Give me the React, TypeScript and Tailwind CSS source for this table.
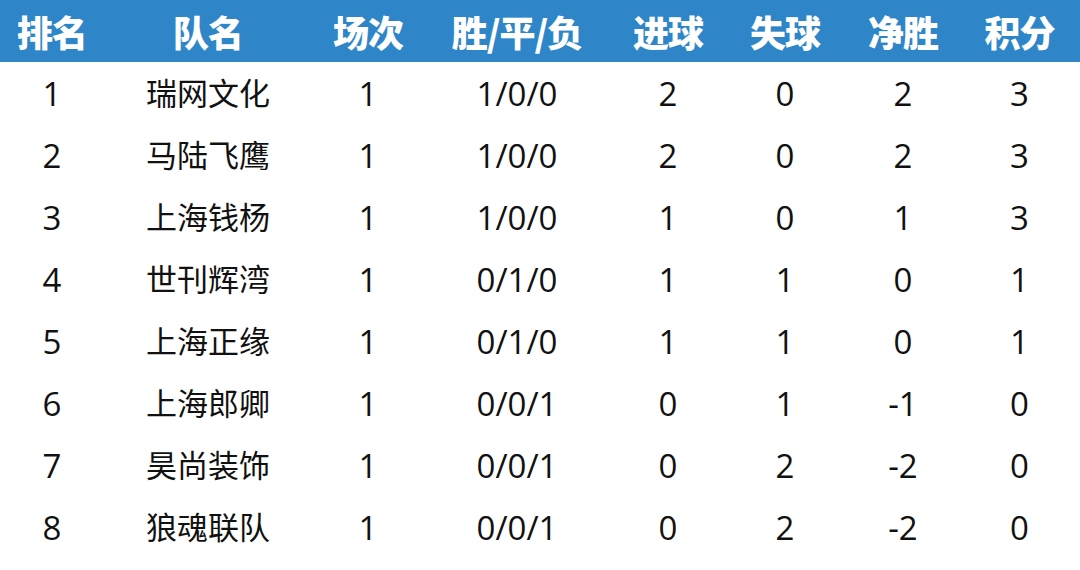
import React from "react";

const headers = ["排名", "队名", "场次", "胜/平/负", "进球", "失球", "净胜", "积分"];
const rows: string[][] = [
  ["1", "瑞网文化", "1", "1/0/0", "2", "0", "2", "3"],
  ["2", "马陆飞鹰", "1", "1/0/0", "2", "0", "2", "3"],
  ["3", "上海钱杨", "1", "1/0/0", "1", "0", "1", "3"],
  ["4", "世刊辉湾", "1", "0/1/0", "1", "1", "0", "1"],
  ["5", "上海正缘", "1", "0/1/0", "1", "1", "0", "1"],
  ["6", "上海郎卿", "1", "0/0/1", "0", "1", "-1", "0"],
  ["7", "昊尚装饰", "1", "0/0/1", "0", "2", "-2", "0"],
  ["8", "狼魂联队", "1", "0/0/1", "0", "2", "-2", "0"],
];

const grid = "grid grid-cols-[104px_208px_112px_186px_116px_118px_118px_115px]";

export default function App() {
  return (
    <div className="w-[1080px] h-[570px] bg-white overflow-hidden">
      <div className={`${grid} h-[62px] bg-[#2e86c8] items-center text-white text-[36px] font-black leading-none`} style={{ fontFamily: '"Noto Sans CJK SC", sans-serif' }}>
        {headers.map((h) => (
          <div key={h} className="flex justify-center items-center tracking-[-1px]">{h}</div>
        ))}
      </div>
      <div className="text-[#111] leading-none" style={{ fontFamily: '"Open Sans", "Noto Sans CJK SC", sans-serif' }}>
        {rows.map((r, i) => (
          <div key={i} className={`${grid} h-[62px] items-center`}>
            {r.map((c, j) => (
              <div key={j} className={`flex justify-center items-center ${j === 1 ? "text-[31px]" : "text-[33px]"}`}>{c}</div>
            ))}
          </div>
        ))}
      </div>
    </div>
  );
}
